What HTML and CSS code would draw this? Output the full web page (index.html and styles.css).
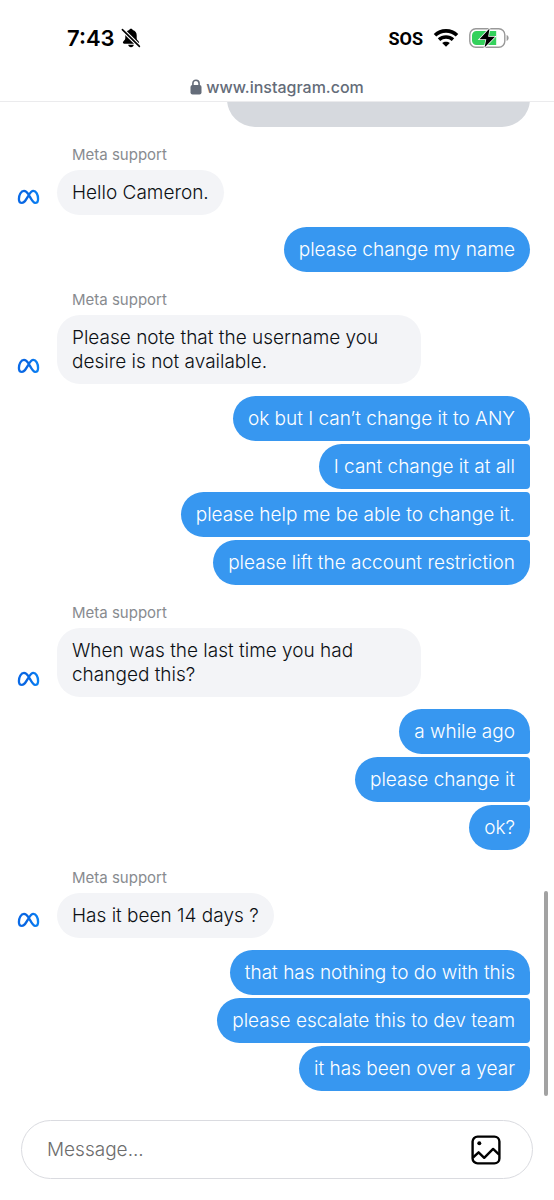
FILE: index.html
```html
<!DOCTYPE html>
<html lang="en">
<head>
<meta charset="utf-8">
<meta name="viewport" content="width=device-width, initial-scale=1">
<title>Meta support</title>
<link rel="stylesheet" href="styles.css">
</head>
<body>
<svg class="defs" width="0" height="0" aria-hidden="true">
  <defs>
    <linearGradient id="meta-blue" x1="0" y1="0" x2="1" y2="0">
      <stop offset="0" stop-color="#0a6be8"/>
      <stop offset="0.4" stop-color="#0865e0"/>
      <stop offset="1" stop-color="#0a82f5"/>
    </linearGradient>
    <symbol id="meta" viewBox="0 0 24 16">
      <path d="M12 5.2C10.500 3 9.100 1.700 7.300 1.700C4.100 1.700 2 6.100 2 10C2 12.700 3.200 14.200 5.200 14.200C7.600 14.200 9.100 11.500 12 6.600C13.800 3.500 15 1.700 17 1.700C20 1.700 22 5.800 22 10C22 12.700 20.900 14.200 18.900 14.200C16.600 14.200 15.300 11 12 5.200Z" fill="none" stroke="url(#meta-blue)" stroke-width="2.400" stroke-linejoin="round"/>
    </symbol>
  </defs>
</svg>
<div class="app">
  <header class="top">
    <div class="status">
      <div class="status-left">
        <span class="time">7:43</span>
        <svg width="20" height="20" viewBox="0 0 20 20" aria-label="Silent">
          <path d="M10 .8c-.9 0-1.500.5-1.700 1.300C5.700 2.900 4.300 4.900 4.300 7.500v2.600c0 1.400-.7 2-1.600 3-.5.6-.8 1-.8 1.500 0 .7.5 1.100 1.300 1.100h13.600c.8 0 1.300-.4 1.300-1.100 0-.5-.3-.9-.8-1.500-.9-1-1.600-1.600-1.600-3V7.500c0-2.600-1.400-4.600-4-5.400C11.500 1.300 10.900.8 10 .8zM7.200 16.800c.2 1.500 1.300 2.500 2.800 2.500s2.600-1 2.800-2.500z"/>
          <path d="M2.400 2.600L17.400 17.400" stroke="#fff" stroke-width="4"/>
          <path d="M1.400 1.600L18.400 18.400" stroke="#000" stroke-width="1.600" stroke-linecap="round"/>
        </svg>
      </div>
      <div class="status-right">
        <span class="sos">SOS</span>
        <svg width="26" height="18" viewBox="0 0 26 18" fill="none" stroke="#000" stroke-width="3.600" aria-label="Wi-Fi">
          <path d="M2 6.200C8 .4 18 .4 24 6.200"/>
          <path d="M6 10.700c4-3.600 10-3.600 14 0"/>
          <path d="M13 17.800l-3.800-3.800c2-1.700 5.600-1.700 7.600 0z" fill="#000" stroke="none"/>
        </svg>
        <svg width="40" height="22" viewBox="0 0 40 22" aria-label="Battery charging">
          <rect x=".8" y="1.800" width="35" height="18.400" rx="6" fill="#fff" stroke="#999" stroke-width="1.400"/>
          <path d="M7.500 4h19.700v14H7.500A4.500 4.500 0 0 1 3 13.500v-5A4.500 4.500 0 0 1 7.500 4z" fill="#34d15c"/>
          <path d="M37.600 8v6c1.200-.4 2-1.600 2-3s-.8-2.600-2-3z" fill="#999"/>
          <path d="M20.500 1.500L10.500 12.300h6.800L15.500 20.500 26 9.700h-6.800z" stroke="#fff" stroke-width="1.500" paint-order="stroke"/>
        </svg>
      </div>
    </div>
    <div class="url">
      <svg width="12" height="16" viewBox="0 0 12 16" aria-hidden="true">
        <rect x="0.500" y="6" width="11" height="9.500" rx="2" fill="#646c79"/>
        <path d="M2.900 7V4.500C2.900 2.300 4.200 1.200 6 1.200s3.100 1.100 3.100 3.300V7" fill="none" stroke="#646c79" stroke-width="1.600"/>
      </svg>
      <span>www.instagram.com</span>
    </div>
  </header>

  <main class="chat">
    <div class="sent"><div class="attachment"></div></div>

    <section class="received">
      <div class="name">Meta support</div>
      <div class="row"><svg class="avatar" aria-hidden="true"><use href="#meta"/></svg><p class="bubble">Hello Cameron.</p></div>
    </section>
    <section class="sent"><p class="bubble">please change my name</p></section>

    <section class="received">
      <div class="name">Meta support</div>
      <div class="row"><svg class="avatar" aria-hidden="true"><use href="#meta"/></svg><p class="bubble">Please note that the username you desire is not available.</p></div>
    </section>
    <section class="sent">
      <p class="bubble">ok but I can’t change it to ANY</p>
      <p class="bubble">I cant change it at all</p>
      <p class="bubble">please help me be able to change it.</p>
      <p class="bubble">please lift the account restriction</p>
    </section>

    <section class="received">
      <div class="name">Meta support</div>
      <div class="row"><svg class="avatar" aria-hidden="true"><use href="#meta"/></svg><p class="bubble">When was the last time you had changed this?</p></div>
    </section>
    <section class="sent">
      <p class="bubble">a while ago</p>
      <p class="bubble">please change it</p>
      <p class="bubble">ok?</p>
    </section>

    <section class="received">
      <div class="name">Meta support</div>
      <div class="row"><svg class="avatar" aria-hidden="true"><use href="#meta"/></svg><p class="bubble">Has it been 14 days ?</p></div>
    </section>
    <section class="sent">
      <p class="bubble">that has nothing to do with this</p>
      <p class="bubble">please escalate this to dev team</p>
      <p class="bubble">it has been over a year</p>
    </section>
    <div class="scrollbar"></div>
  </main>

  <form class="composer">
    <input class="field" type="text" placeholder="Message..." aria-label="Message">
    <button class="photo" type="button" aria-label="Add photo">
      <svg width="30" height="30" viewBox="0 0 30 30" fill="none" stroke="#000" stroke-width="2.400" stroke-linejoin="round">
        <rect x="1.600" y="1.600" width="26.800" height="26.800" rx="5"/>
        <circle cx="8.300" cy="8.300" r="2" fill="#000" stroke="none"/>
        <path d="M2 22.500l5.600-5.200 5.600 5.500 8.900-8.900 6 5.700"/>
      </svg>
    </button>
  </form>
</div>
</body>
</html>
```

FILE: styles.css
```css
* { box-sizing: border-box; }

body {
  margin: 0;
  background: #fff;
  color: #0c1014;
  font-family: Inter, "Liberation Sans", sans-serif;
  font-size: 19px;
  font-weight: 300;
}

.defs { position: absolute; }

.app {
  display: flex;
  flex-direction: column;
  height: 100vh;
}

.top { border-bottom: 1px solid #ebebed; }

.status {
  display: flex;
  justify-content: space-between;
  align-items: center;
  height: 76px;
  padding: 0 45px 0 67px;
  color: #000;
}

.status-left, .status-right {
  display: flex;
  align-items: center;
}

.status-left { gap: 6px; }
.status-right { gap: 10px; }
.time { font-size: 22px; font-weight: 600; }

.sos {
  font-family: "Liberation Sans Narrow", Roboto, sans-serif;
  font-size: 18px;
  font-weight: 700;
}

.url {
  display: flex;
  justify-content: center;
  gap: 4px;
  height: 25px;
  line-height: 22px;
  color: #646c79;
  font-size: 16px;
  font-weight: 500;
}

.url svg { margin-top: 3px; }

.chat {
  position: relative;
  display: flex;
  flex: 1;
  flex-direction: column;
  justify-content: flex-end;
  min-height: 0;
  overflow: hidden;
  padding: 0 24px 29px 17px;
}

.name {
  padding: 19px 0 6px 55px;
  color: #888b8f;
  font-size: 15px;
  font-weight: 400;
  line-height: 18px;
}

.row {
  display: flex;
  align-items: flex-end;
  gap: 17px;
}

.avatar {
  flex: none;
  width: 23px;
  height: 16px;
  margin-bottom: 10px;
}

.bubble {
  max-width: 364px;
  margin: 0;
  padding: 11px 15px 10px;
  border-radius: 23px;
  background: #f3f4f7;
  line-height: 24px;
}

.received { margin-bottom: 12px; }

.sent {
  display: flex;
  flex: none;
  flex-direction: column;
  align-items: flex-end;
  gap: 3px;
}

.sent .bubble {
  border-radius: 23px 4px 4px 23px;
  background: #3797f0;
  color: #fff;
}

.sent .bubble:first-child { border-top-right-radius: 23px; }
.sent .bubble:last-child { border-bottom-right-radius: 23px; }

.attachment {
  width: 59%;
  height: 90px;
  border-radius: 28px;
  background: #d6d9de;
}

.scrollbar {
  position: absolute;
  right: 6px;
  bottom: 24px;
  width: 4px;
  height: 205px;
  border-radius: 2px;
  background: #a2a2a2;
}

.composer {
  display: flex;
  align-items: center;
  height: 59px;
  margin: 0 21px 21px;
  padding: 0 31px 0 25px;
  border: 1px solid #dadbe0;
  border-radius: 30px;
}

.field {
  flex: 1;
  min-width: 0;
  padding: 0;
  border: 0;
  outline: 0;
  background: none;
  font: inherit;
}

.field::placeholder { color: #6d6d6d; opacity: 1; }

.photo {
  display: flex;
  padding: 0;
  border: 0;
  background: none;
}
```
